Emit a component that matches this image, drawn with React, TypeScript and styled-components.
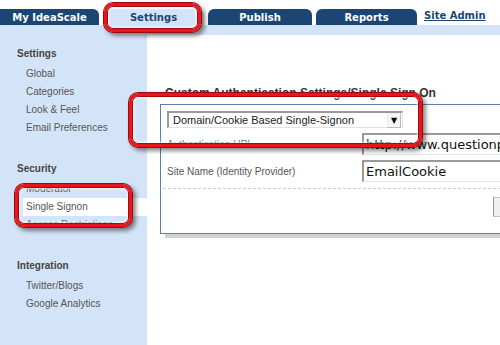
import React from 'react';
import styled, { createGlobalStyle } from 'styled-components';

const GlobalStyle = createGlobalStyle`
  html, body {
    margin: 0;
    padding: 0;
    background: #ffffff;
    overflow: hidden;
  }
`;

const NAVY = '#1b4674';
const PALE = '#d4e4f8';

const Page = styled.div`
  position: relative;
  width: 500px;
  height: 345px;
  overflow: hidden;
  background: #fff;
  font-family: "Liberation Sans", Arial, sans-serif;
`;

const TabBar = styled.div`
  display: flex;
  align-items: flex-end;
  gap: 4px;
  height: 25px;
`;

const Tab = styled.div<{ $active?: boolean; $w: number; $flatLeft?: boolean }>`
  width: ${(p) => p.$w}px;
  height: 16px;
  display: flex;
  align-items: center;
  justify-content: center;
  border-radius: ${(p) => (p.$flatLeft ? '0 6px 0 0' : '6px 6px 0 0')};
  background: ${(p) => (p.$active ? PALE : NAVY)};
  color: ${(p) => (p.$active ? NAVY : '#fff')};
  font-family: "DejaVu Sans", Verdana, sans-serif;
  font-weight: bold;
  font-size: 10px;
  padding-top: 1px;
  box-sizing: border-box;
`;

const AdminLink = styled.a`
  align-self: center;
  margin: 5px 0 0 3px;
  color: ${NAVY};
  font-family: "DejaVu Sans", Verdana, sans-serif;
  font-weight: bold;
  font-size: 10px;
  text-decoration: underline;
`;

const Band = styled.div`
  height: 10px;
  background: ${PALE};
`;

const Body = styled.div`
  display: flex;
  height: 310px;
`;

const Sidebar = styled.nav`
  width: 147px;
  flex-shrink: 0;
  background: ${PALE};
  padding-top: 10px;
  box-sizing: border-box;
`;

const Section = styled.div`
  & + & {
    margin-top: 23px;
  }
`;

const SectionTitle = styled.div`
  margin: 0 0 2px 17px;
  line-height: 18px;
  font-size: 10px;
  font-weight: bold;
  color: #444;
`;

const NavItem = styled.div<{ $selected?: boolean }>`
  margin-left: 23px;
  padding-left: 3px;
  line-height: 18px;
  font-size: 10px;
  color: #555;
  background: ${(p) => (p.$selected ? '#fff' : 'transparent')};
`;

const Content = styled.main`
  flex: 1;
  min-width: 0;
  overflow: hidden;
  padding: 51px 0 0 13px;
`;

const Heading = styled.h2`
  margin: 0 0 4px 5px;
  line-height: 14px;
  font-size: 12px;
  font-weight: bold;
  color: #333;
  white-space: nowrap;
`;

const Panel = styled.div`
  width: 380px;
  border: 1px solid #5e80a8;
  box-shadow: 5px 4px 0 #d2d2d2;
  padding: 6px 6px 16px;
  background: #fff;
`;

const Select = styled.div`
  width: 236px;
  height: 17px;
  box-sizing: border-box;
  display: flex;
  align-items: center;
  border-top: 2px solid #9a9a9a;
  border-left: 2px solid #9a9a9a;
  border-right: 1px solid #e2e2e2;
  border-bottom: 1px solid #e2e2e2;
  background: #fff;
  font-size: 11px;
  color: #222;
`;

const SelectText = styled.span`
  flex: 1;
  padding-left: 4px;
  white-space: nowrap;
`;

const SelectArrow = styled.span`
  width: 12px;
  height: 13px;
  margin-right: 1px;
  display: flex;
  align-items: center;
  justify-content: center;
  border: 1px solid #bbb;
  border-top-color: #eee;
  border-left-color: #eee;
  background: #f6f6f6;
  font-family: "DejaVu Sans", sans-serif;
  font-size: 8px;
  color: #000;
`;

const Row = styled.div`
  display: grid;
  grid-template-columns: 195px 1fr;
  align-items: center;
  margin-top: 5px;
`;

const Label = styled.span`
  font-size: 10px;
  color: #555;
  white-space: nowrap;
`;

const Input = styled.div`
  height: 22px;
  box-sizing: border-box;
  display: flex;
  align-items: center;
  padding-left: 2px;
  border-top: 2px solid #9a9a9a;
  border-left: 2px solid #9a9a9a;
  border-right: 1px solid #e2e2e2;
  border-bottom: 1px solid #e2e2e2;
  background: #fff;
  font-family: "DejaVu Sans", "Lucida Grande", sans-serif;
  font-size: 13px;
  color: #111;
  white-space: nowrap;
  overflow: hidden;
`;

const Divider = styled.div`
  margin: 6px -4px 0;
  border-top: 1px dashed #c8c8c8;
`;

const ButtonRow = styled.div`
  display: flex;
  padding: 8px 0 0 326px;
`;

const Button = styled.div`
  width: 60px;
  height: 20px;
  box-sizing: border-box;
  border: 1px solid #c4c4c4;
  border-left-color: #999;
  background: #f0f0f0;
`;

const Callout = styled.div`
  position: absolute;
  box-sizing: border-box;
  border: 3px solid #e8161c;
  border-radius: 9px;
  box-shadow:
    0 0 0 1px #9a0b0b,
    inset 0 0 0 1px #a30c0c,
    inset 0 0 3px 2px rgba(255, 255, 255, 0.75),
    3px 3px 4px 1px rgba(0, 0, 0, 0.45);
  pointer-events: none;
`;

const settingsLinks = ['Global', 'Categories', 'Look & Feel', 'Email Preferences'];
const securityLinks = ['Moderator', 'Single Signon', 'Access Restrictions'];
const integrationLinks = ['Twitter/Blogs', 'Google Analytics'];

export default function App() {
  return (
    <Page>
      <GlobalStyle />
      <TabBar>
        <Tab $w={99} $flatLeft>My IdeaScale</Tab>
        <Tab $w={101} $active>Settings</Tab>
        <Tab $w={104}>Publish</Tab>
        <Tab $w={101}>Reports</Tab>
        <AdminLink>Site Admin</AdminLink>
      </TabBar>
      <Band />
      <Body>
        <Sidebar>
          <Section>
            <SectionTitle>Settings</SectionTitle>
            {settingsLinks.map((l) => (
              <NavItem key={l}>{l}</NavItem>
            ))}
          </Section>
          <Section>
            <SectionTitle>Security</SectionTitle>
            {securityLinks.map((l) => (
              <NavItem key={l} $selected={l === 'Single Signon'}>
                {l}
              </NavItem>
            ))}
          </Section>
          <Section>
            <SectionTitle>Integration</SectionTitle>
            {integrationLinks.map((l) => (
              <NavItem key={l}>{l}</NavItem>
            ))}
          </Section>
        </Sidebar>
        <Content>
          <Heading>Custom Authentication Settings/Single Sign On</Heading>
          <Panel>
            <Select>
              <SelectText>Domain/Cookie Based Single-Signon</SelectText>
              <SelectArrow>▼</SelectArrow>
            </Select>
            <Row>
              <Label>Authentication URL</Label>
              <Input>http://www.questionpro.com/a/login</Input>
            </Row>
            <Row>
              <Label>Site Name (Identity Provider)</Label>
              <Input>EmailCookie</Input>
            </Row>
            <Divider />
            <ButtonRow>
              <Button />
            </ButtonRow>
          </Panel>
        </Content>
      </Body>
      <Callout style={{ left: 104, top: 3, width: 97, height: 29 }} />
      <Callout style={{ left: 129, top: 93, width: 293, height: 54 }} />
      <Callout style={{ left: 15, top: 184, width: 117, height: 43 }} />
    </Page>
  );
}
